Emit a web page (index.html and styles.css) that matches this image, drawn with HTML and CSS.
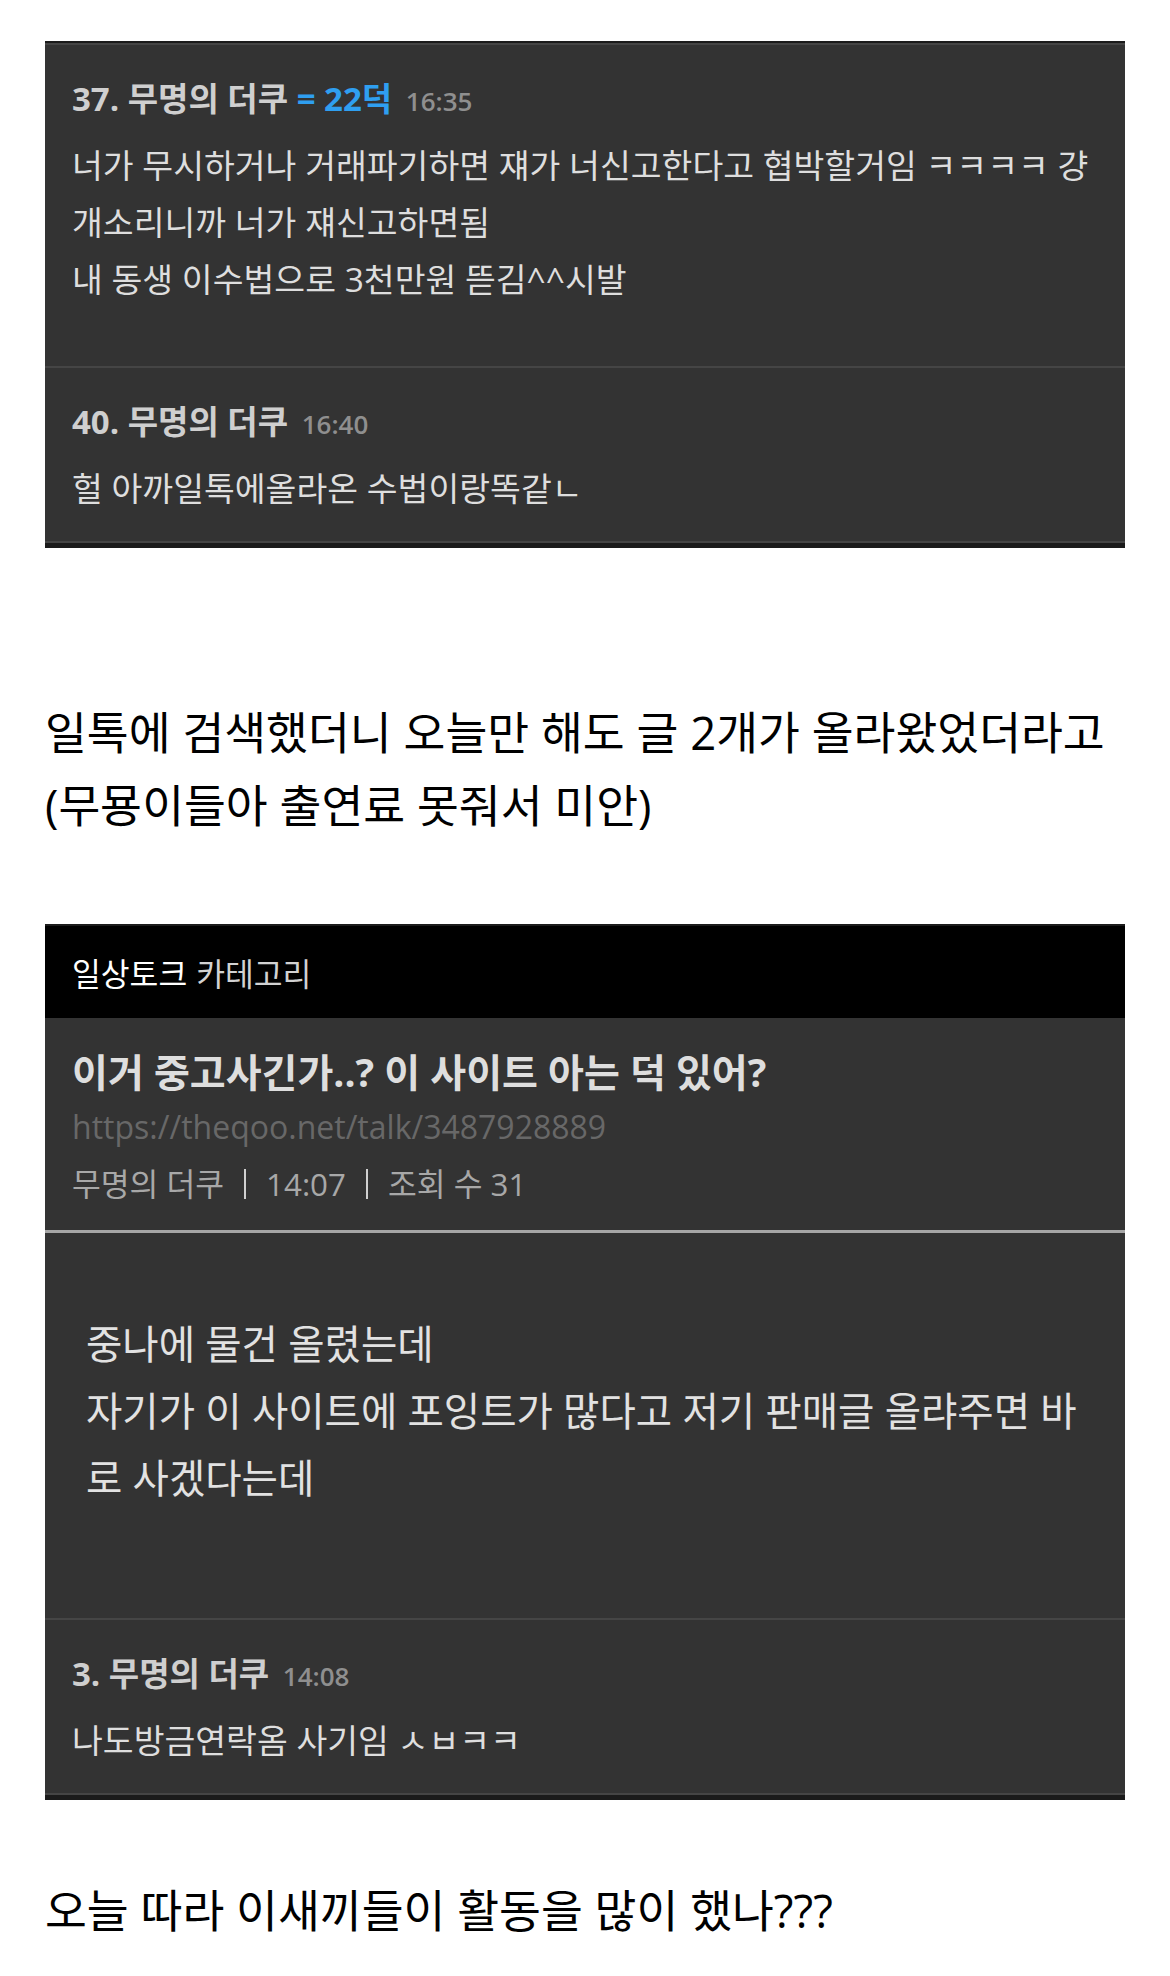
FILE: index.html
```html
<!DOCTYPE html>
<html lang="ko">
<head>
    <meta charset="UTF-8">
    <meta name="viewport" content="width=device-width, initial-scale=1.0">
    <title>일톡 캡처</title>
    <link rel="stylesheet" href="styles.css">
</head>
<body>
    <main class="page">
        <section class="card">
            <div class="comment comment-first">
                <div class="comment-head">
                    <b>37. 무명의 더쿠</b>
                    <span class="level">= 22덕</span>
                    <span class="time">16:35</span>
                </div>
                <p class="comment-body">너가 무시하거나 거래파기하면 쟤가 너신고한다고 협박할거임 ㅋㅋㅋㅋ 걍 개소리니까 너가 쟤신고하면됨<br>내 동생 이수법으로 3천만원 뜯김^^시발</p>
            </div>
            <div class="comment">
                <div class="comment-head">
                    <b>40. 무명의 더쿠</b>
                    <span class="time">16:40</span>
                </div>
                <p class="comment-body">헐 아까일톡에올라온 수법이랑똑같ㄴ</p>
            </div>
        </section>

        <p class="note">일톡에 검색했더니 오늘만 해도 글 2개가 올라왔었더라고<br>(무묭이들아 출연료 못줘서 미안)</p>

        <section class="card">
            <div class="board-bar">
                <span class="board-name">일상토크</span>
                <span class="board-label">카테고리</span>
            </div>
            <div class="post-head">
                <h2 class="post-title">이거 중고사긴가..? 이 사이트 아는 덕 있어?</h2>
                <div class="post-url">https://theqoo.net/talk/3487928889</div>
                <div class="post-meta">
                    <span>무명의 더쿠</span>
                    <span class="sep"></span>
                    <span>14:07</span>
                    <span class="sep"></span>
                    <span>조회 수 31</span>
                </div>
            </div>
            <div class="post-body">
                <p>중나에 물건 올렸는데<br>자기가 이 사이트에 포잉트가 많다고 저기 판매글 올랴주면 바로 사겠다는데</p>
            </div>
            <div class="comment">
                <div class="comment-head">
                    <b>3. 무명의 더쿠</b>
                    <span class="time">14:08</span>
                </div>
                <p class="comment-body">나도방금연락옴 사기임 ㅅㅂㅋㅋ</p>
            </div>
        </section>

        <p class="note note-last">오늘 따라 이새끼들이 활동을 많이 했나???</p>
    </main>
</body>
</html>
```

FILE: styles.css
```css
* {
    margin: 0;
    padding: 0;
    box-sizing: border-box;
}

body {
    background: #fff;
    font-family: "Open Sans", "Noto Sans CJK KR", sans-serif;
    color: #111;
}

.page {
    padding: 41px 45px 40px;
}

/* dark capture boxes */
.card {
    background: #333;
    border-top: 2px solid #1b1b1b;
    border-bottom: 5px solid #1b1b1b;
}

.comment {
    padding: 30px 27px 24px;
    border-top: 2px solid #454545;
}

.comment:last-child {
    border-bottom: 2px solid #454545;
}

.comment-head {
    font-size: 33px;
    line-height: 48px;
    color: #cfcfcf;
    white-space: nowrap;
}

.comment-head b {
    font-weight: 700;
}

.level {
    font-weight: 700;
    color: #2f9ff0;
}

.time {
    margin-left: 5px;
    font-size: 26px;
    font-weight: 600;
    color: #8f8f8f;
}

.comment-body {
    margin-top: 12px;
    font-size: 33.5px;
    line-height: 57px;
    color: #dedede;
}

.comment-first .comment-body {
    padding-bottom: 34px;
}

/* plain text between boxes */
.note {
    margin: 148px 0 82px;
    font-size: 45.5px;
    line-height: 73px;
    color: #000;
}

.note-last {
    margin: 74px 0 0;
}

.board-bar {
    display: flex;
    align-items: center;
    gap: 9px;
    height: 92px;
    padding: 0 27px;
    background: #000;
    font-size: 31.3px;
}

.board-name {
    color: #fff;
}

.board-label {
    color: #d2d2d2;
}

.post-head {
    padding: 27px 27px 24px;
    border-bottom: 3px solid #a6a6a6;
}

.post-title {
    font-size: 39px;
    line-height: 54px;
    font-weight: 700;
    color: #dedede;
    margin-bottom: 5px;
}

.post-url {
    font-size: 32px;
    line-height: 46px;
    color: #686868;
    margin-bottom: 12px;
}

.post-meta {
    display: flex;
    align-items: center;
    font-size: 31.3px;
    line-height: 44px;
    color: #a8a8a8;
}

.sep {
    width: 2px;
    height: 30px;
    margin: 0 20px;
    background: #d0d0d0;
}

.post-body {
    padding: 78px 40px 106px 41px;
    font-size: 39.5px;
    line-height: 67px;
    color: #e2e2e2;
}
```
